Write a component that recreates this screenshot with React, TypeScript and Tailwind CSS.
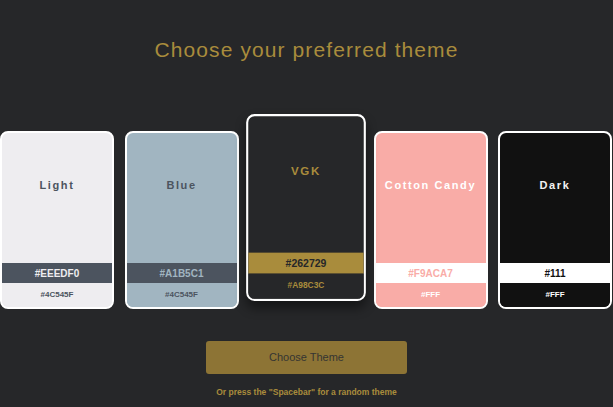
import React from "react";

type Theme = {
  name: string;
  bg: string;
  nameColor: string;
  bgHex: string;
  fgHex: string;
  bandBg: string;
  bandText: string;
  footBg: string;
  footText: string;
  active?: boolean;
};

const themes: Theme[] = [
  {
    name: "Light",
    bg: "bg-[#EEEDF0]",
    nameColor: "text-[#4C545F]",
    bgHex: "#EEEDF0",
    fgHex: "#4C545F",
    bandBg: "bg-[#4C545F]",
    bandText: "text-[#EEEDF0]",
    footBg: "bg-[#EEEDF0]",
    footText: "text-[#4C545F]",
  },
  {
    name: "Blue",
    bg: "bg-[#A1B5C1]",
    nameColor: "text-[#4C545F]",
    bgHex: "#A1B5C1",
    fgHex: "#4C545F",
    bandBg: "bg-[#4C545F]",
    bandText: "text-[#A1B5C1]",
    footBg: "bg-[#A1B5C1]",
    footText: "text-[#4C545F]",
  },
  {
    name: "VGK",
    bg: "bg-[#262729]",
    nameColor: "text-[#A98C3C]",
    bgHex: "#262729",
    fgHex: "#A98C3C",
    bandBg: "bg-[#A98C3C]",
    bandText: "text-[#262729]",
    footBg: "bg-[#262729]",
    footText: "text-[#A98C3C]",
    active: true,
  },
  {
    name: "Cotton Candy",
    bg: "bg-[#F9ACA7]",
    nameColor: "text-white",
    bgHex: "#F9ACA7",
    fgHex: "#FFF",
    bandBg: "bg-white",
    bandText: "text-[#F9ACA7]",
    footBg: "bg-[#F9ACA7]",
    footText: "text-white",
  },
  {
    name: "Dark",
    bg: "bg-[#111111]",
    nameColor: "text-[#f2f2f2]",
    bgHex: "#111",
    fgHex: "#FFF",
    bandBg: "bg-white",
    bandText: "text-[#111111]",
    footBg: "bg-[#111111]",
    footText: "text-white",
  },
];

function Card({ t }: { t: Theme }) {
  return (
    <div
      className={
        "w-[114px] h-[178px] shrink-0 rounded-[8px] border-2 border-white overflow-hidden flex flex-col " +
        t.bg +
        (t.active
          ? " scale-[1.05] -translate-y-[12.5px] shadow-[0_6px_10px_rgba(0,0,0,0.45)]"
          : "")
      }
    >
      <div className="h-[130px] pt-[45px] flex justify-center">
        <span
          className={
            "text-[11px] leading-[14px] font-bold tracking-[1.6px] " + t.nameColor
          }
        >
          {t.name}
        </span>
      </div>
      <div
        className={
          "h-[20px] flex items-center justify-center text-[10px] font-bold " +
          t.bandBg +
          " " +
          t.bandText
        }
      >
        {t.bgHex}
      </div>
      <div
        className={
          "flex-1 flex items-center justify-center text-[8px] font-bold " +
          t.footBg +
          " " +
          t.footText
        }
      >
        {t.fgHex}
      </div>
    </div>
  );
}

export default function App() {
  return (
    <div
      className="w-full h-[407px] bg-[#262729] flex flex-col items-center overflow-hidden"
      style={{ fontFamily: '"Liberation Sans", Arial, sans-serif' }}
    >
      <h1 className="mt-[37px] text-[21px] leading-[26px] tracking-[1.1px] text-[#A98C3C] font-normal">
        Choose your preferred theme
      </h1>
      <div className="mt-[68px] w-full flex justify-start pl-[0px] gap-[10.5px]">
        {themes.map((t) => (
          <Card key={t.name} t={t} />
        ))}
      </div>
      <button className="mt-[32px] w-[201px] h-[33px] rounded-[3px] bg-[#8D7435] text-[#353532] text-[11px]">
        Choose Theme
      </button>
      <p className="mt-[13px] text-[8.5px] leading-[10px] font-bold text-[#A98C3C]">
        Or press the "Spacebar" for a random theme
      </p>
    </div>
  );
}
